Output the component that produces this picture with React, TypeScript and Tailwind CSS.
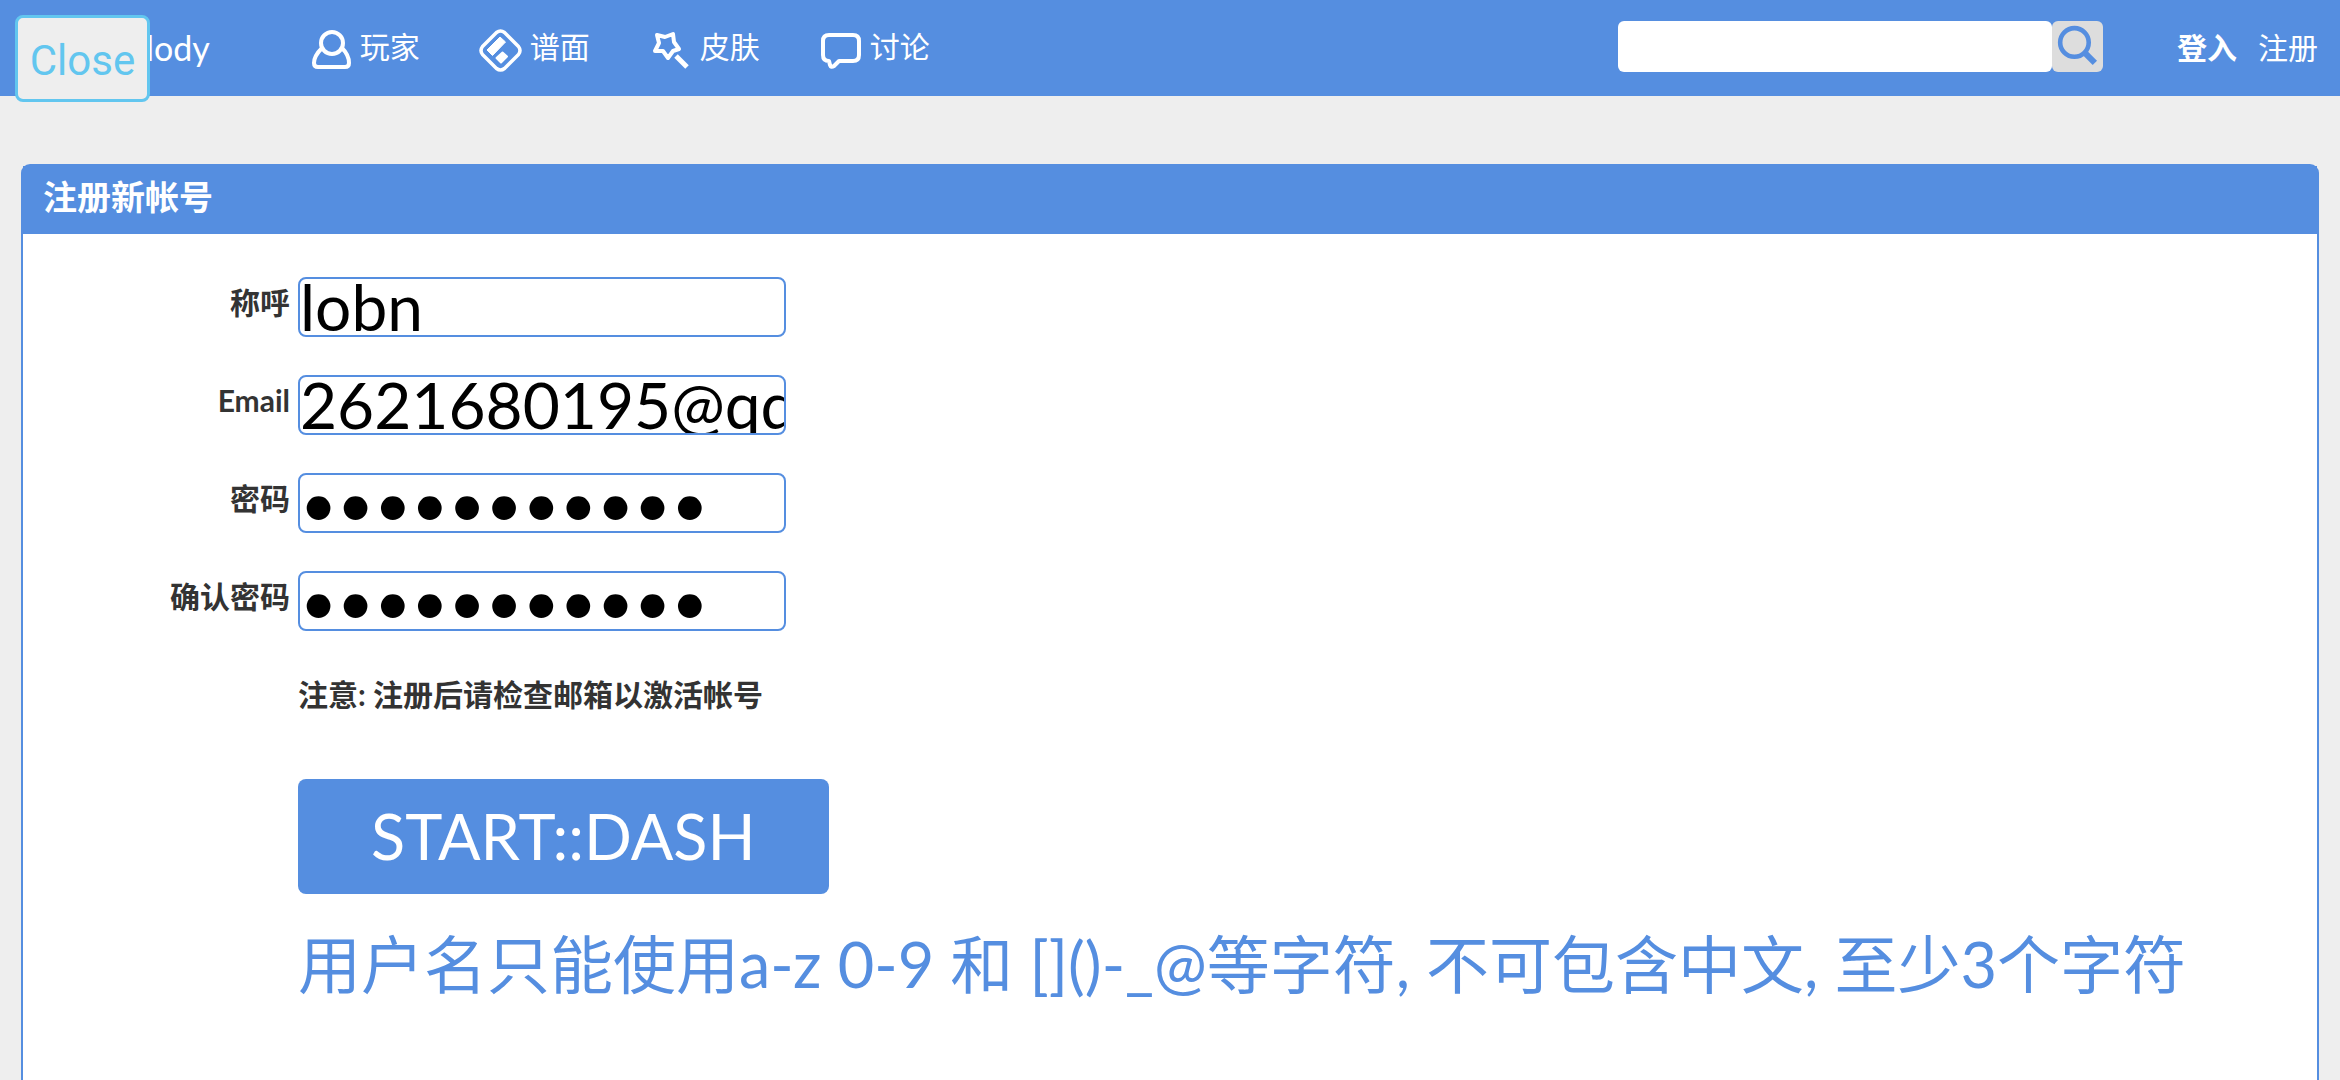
import { useState, type ReactNode } from "react";

type NavItem = { label: string; href: string; icon: ReactNode };

const PlayerIcon = () => (
  <svg viewBox="0 0 44 44" className="size-11 overflow-visible" fill="none" stroke="currentColor" strokeWidth="4" strokeLinejoin="round">
    <circle cx="21" cy="14" r="11" />
    <path d="M11 19C6 24 3 30 3 34Q3 38 7 38H34Q38 38 38 34C38 30 36 24 31 19" />
  </svg>
);

const ChartIcon = () => (
  <svg viewBox="0 0 44 44" className="size-11 overflow-visible" fill="none" stroke="currentColor" strokeWidth="3.5" strokeLinejoin="round">
    <path d="M15.5 3.5Q19.5 0.5 23.5 3.5L37.5 17.5Q40.5 21.5 37.5 25.5L23.5 39.5Q19.5 42.5 15.5 39.5L1.5 25.5Q-1.5 21.5 1.5 17.5Z" />
    <path d="M19 8L24.5 13L11.5 26.5L6 21Z" fill="currentColor" strokeWidth="1" />
    <path d="M21.5 23.5L26 27.5L20 33.5L15.5 29Z" fill="currentColor" strokeWidth="2" />
  </svg>
);

const SkinIcon = () => (
  <svg viewBox="0 0 44 44" className="size-11 overflow-visible" fill="none" stroke="currentColor" strokeWidth="4" strokeLinejoin="round">
    <path d="M6 6L14 8L22 5L23 13L28 20L22 22L17 29L12 22L4 22L8 14Z" />
    <path d="M25 27L36 38" strokeWidth="5" />
  </svg>
);

const TalkIcon = () => (
  <svg viewBox="0 0 44 44" className="size-11 overflow-visible" fill="none" stroke="currentColor" strokeWidth="4" strokeLinejoin="round">
    <path d="M8 6H32Q38 6 38 12V26Q38 32 32 32H18L13 37Q10 39 9 36L8 32Q2 32 2 26V12Q2 6 8 6Z" />
  </svg>
);

const SearchIcon = () => (
  <svg viewBox="0 0 50 50" className="size-full" fill="none" stroke="currentColor" strokeWidth="4.5">
    <circle cx="22" cy="21" r="14" />
    <path d="M32 31L42 41" strokeWidth="6" />
  </svg>
);

const navItems: NavItem[] = [
  { label: "玩家", href: "#player", icon: <PlayerIcon /> },
  { label: "谱面", href: "#chart", icon: <ChartIcon /> },
  { label: "皮肤", href: "#skin", icon: <SkinIcon /> },
  { label: "讨论", href: "#talk", icon: <TalkIcon /> },
];

const Header = () => {
  const [query, setQuery] = useState("");
  return (
    <header className="flex h-24 items-center bg-[#558ee0] pr-[22px] pl-[98px] text-[30px] leading-[38px] text-white">
      <a href="#home" className="mr-[101px] text-[34px]">
        Malody
      </a>
      <nav className="flex gap-[61px]">
        {navItems.map(({ label, href, icon }) => (
          <a key={href} href={href} className="flex items-start gap-[5px]">
            <span className="pt-[5px]">{icon}</span>
            <span className="pt-[3px]">{label}</span>
          </a>
        ))}
      </nav>
      <form
        onSubmit={(e) => e.preventDefault()}
        className="mr-[74px] ml-auto flex items-center pb-[3px]"
      >
        <input
          type="text"
          aria-label="搜索"
          value={query}
          onChange={({ target: { value } }) => setQuery(value)}
          className="h-[51px] w-[434px] rounded-md bg-white px-2 text-black outline-none"
        />
        <button
          type="submit"
          aria-label="搜索"
          className="size-[51px] rounded-md bg-[#dddddd] text-[#558ee0]"
        >
          <SearchIcon />
        </button>
      </form>
      <div className="flex gap-[21px] pb-[3px]">
        <a href="#login" className="font-bold">
          登入
        </a>
        <a href="#register">注册</a>
      </div>
    </header>
  );
};

type FieldProps = { id: string; label: string; type: string; initial: string };

const Field = ({ id, label, type, initial }: FieldProps) => {
  const [value, setValue] = useState(initial);
  return (
    <div className="flex">
      <label
        htmlFor={id}
        className="mr-2 w-[267px] pt-[6px] text-right text-[30px] leading-[38px] font-bold"
      >
        {label}
      </label>
      <input
        id={id}
        type={type}
        value={value}
        onChange={(e) => setValue(e.target.value)}
        className="h-[60px] w-[488px] rounded-lg border-2 border-[#558ee0] bg-white text-[64px] text-black outline-none"
      />
    </div>
  );
};

const fields: FieldProps[] = [
  { id: "name", label: "称呼", type: "text", initial: "lobn" },
  { id: "email", label: "Email", type: "text", initial: "2621680195@qq.com" },
  { id: "password", label: "密码", type: "password", initial: "password123" },
  { id: "confirm", label: "确认密码", type: "password", initial: "password123" },
];

const RegisterPanel = () => (
  <main className="mx-[21px] mt-[68px] flex-1 rounded-t-[9px] border-2 border-b-0 border-[#558ee0] bg-white text-[#333333]">
    <h1 className="flex h-[68px] items-center bg-[#558ee0] px-5 pb-[7px] text-[34px] font-bold text-white">
      注册新帐号
    </h1>
    <form
      onSubmit={(e) => e.preventDefault()}
      className="flex flex-col gap-[38px] pt-[43px]"
    >
      {fields.map((field) => (
        <Field key={field.id} {...field} />
      ))}
      <div className="pt-[6px] pl-[275px]">
        <p className="text-[30px] leading-[38px] font-bold">
          注意: 注册后请检查邮箱以激活帐号
        </p>
        <button
          type="submit"
          className="mt-[66px] h-[115px] rounded-lg bg-[#558ee0] px-[73px] text-[63px] text-white"
        >
          START::DASH
        </button>
        <p className="mt-[30px] text-[63px] leading-[80px] text-[#558ee0]">
          用户名只能使用a-z 0-9 和 []()-_@等字符, 不可包含中文, 至少3个字符
        </p>
      </div>
    </form>
  </main>
);

const App = () => {
  const [open, setOpen] = useState(true);
  return (
    <div
      lang="zh-CN"
      className="relative flex min-h-screen flex-col bg-[#eeeeee] font-['Lato','Noto_Sans_CJK_SC',sans-serif]"
    >
      <Header />
      <RegisterPanel />
      {open && (
        <button
          type="button"
          onClick={() => setOpen(false)}
          className="absolute top-[15px] left-[15px] h-[87px] w-[135px] rounded-lg border-3 border-[#62c6ef] bg-[#eeeeee] pt-1 font-['Roboto',sans-serif] text-[42px] text-[#62c6ef]"
        >
          Close
        </button>
      )}
    </div>
  );
};

export default App;
